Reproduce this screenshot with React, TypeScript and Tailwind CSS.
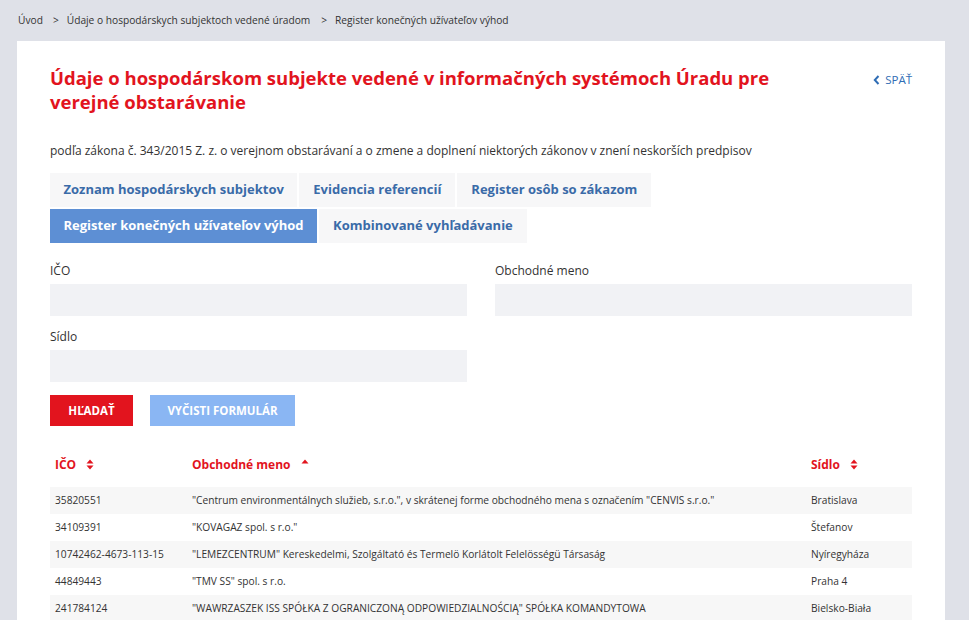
import React from "react";

const rows = [
  {
    ico: "35820551",
    name: "\"Centrum environmentálnych služieb, s.r.o.\", v skrátenej forme obchodného mena s označením \"CENVIS s.r.o.\"",
    seat: "Bratislava",
  },
  { ico: "34109391", name: "\"KOVAGAZ spol. s r.o.\"", seat: "Štefanov" },
  {
    ico: "10742462-4673-113-15",
    name: "\"LEMEZCENTRUM\" Kereskedelmi, Szolgáltató és Termelö Korlátolt Felelösségü Társaság",
    seat: "Nyíregyháza",
  },
  { ico: "44849443", name: "\"TMV SS\" spol. s r.o.", seat: "Praha 4" },
  {
    ico: "241784124",
    name: "\"WAWRZASZEK ISS SPÓŁKA Z OGRANICZONĄ ODPOWIEDZIALNOŚCIĄ\" SPÓŁKA KOMANDYTOWA",
    seat: "Bielsko-Biała",
  },
];

function SortIcon({ up = true, down = true }: { up?: boolean; down?: boolean }) {
  return (
    <svg width="8" height="11" viewBox="0 0 8 11" className="ml-[10px] inline-block align-[-1px]" aria-hidden>
      {up && <path d="M4 0.5 L7.5 4.5 H0.5 Z" fill="#e2141e" />}
      {down && <path d="M4 10.5 L7.5 6.5 H0.5 Z" fill="#e2141e" />}
    </svg>
  );
}

function Field({ label }: { label: string }) {
  return (
    <div>
      <label className="block text-[12px] leading-[18px] text-[#333]">{label}</label>
      <div className="mt-1 h-8 w-full bg-[#f1f2f5]" />
    </div>
  );
}

export default function App() {
  const tabRow1 = ["Zoznam hospodárskych subjektov", "Evidencia referencií", "Register osôb so zákazom"];

  return (
    <div className="min-h-[620px] bg-[#dfe1e8] font-['Open_Sans',sans-serif] text-[#333]">
      <nav className="flex h-[41px] items-center pl-[18px] text-[10.2px] text-[#333]">
        <span>Úvod</span>
        <span className="mx-[8px] ml-[10px]">&gt;</span>
        <span>Údaje o hospodárskych subjektoch vedené úradom</span>
        <span className="mx-[8px] ml-[11px]">&gt;</span>
        <span>Register konečných užívateľov výhod</span>
      </nav>

      <main className="ml-[17px] mr-6 bg-white px-[33px] pt-[25px]">
        <div className="flex items-start justify-between">
          <h1 className="w-[760px] text-[18.5px] font-bold leading-6 text-[#e2141e]">
            Údaje o hospodárskom subjekte vedené v informačných systémoch Úradu pre verejné obstarávanie
          </h1>
          <a className="mt-[5px] flex items-center gap-[5px] text-[11.5px] uppercase text-[#2f6db5]">
            <svg width="7" height="10" viewBox="0 0 7 10" aria-hidden>
              <path d="M5.5 1 L1.8 5 L5.5 9" stroke="#2f6db5" strokeWidth="2" fill="none" />
            </svg>
            Späť
          </a>
        </div>

        <p className="mt-[27px] text-[12px] leading-5">
          podľa zákona č. 343/2015 Z. z. o verejnom obstarávaní a o zmene a doplnení niektorých zákonov v znení neskorších predpisov
        </p>

        <div className="mt-3 flex flex-col gap-[2px]">
          <div className="flex gap-[2px]">
            {tabRow1.map((t, i) => (
              <div
                key={t}
                className={
                  i === 0
                    ? "flex h-[34px] items-center bg-[#f7f7f8] px-[13.5px] text-[13px] font-bold text-[#3a6ba8]"
                    : "flex h-[34px] items-center bg-[#f7f7f8] px-[14px] text-[13px] font-bold text-[#3a6ba8]"
                }
              >
                {t}
              </div>
            ))}
          </div>
          <div className="flex gap-[2px]">
            <div className="flex h-[34px] items-center bg-[#5d8fd4] px-[13.5px] text-[13px] font-bold text-white">
              Register konečných užívateľov výhod
            </div>
            <div className="flex h-[34px] items-center bg-[#f7f7f8] px-[14px] text-[13px] font-bold text-[#3a6ba8]">
              Kombinované vyhľadávanie
            </div>
          </div>
        </div>

        <div className="mt-[19px] grid grid-cols-2 gap-x-7 gap-y-3">
          <Field label="IČO" />
          <Field label="Obchodné meno" />
          <Field label="Sídlo" />
        </div>

        <div className="mt-[13px] flex gap-[17px]">
          <button className="h-[31px] w-[83px] bg-[#e2141e] text-[11.5px] font-bold uppercase text-white">
            Hľadať
          </button>
          <button className="h-[31px] w-[145px] bg-[#8ab6f3] text-[11.5px] font-bold uppercase text-white">
            Vyčisti formulár
          </button>
        </div>

        <table className="mt-[21px] w-full border-collapse text-left text-[10.2px]">
          <thead>
            <tr className="h-10 text-[12px] font-bold text-[#e2141e]">
              <th className="w-[142px] pb-[4px] pl-[5px] font-bold">
                IČO
                <SortIcon />
              </th>
              <th className="pb-[4px] font-bold">
                Obchodné meno
                <SortIcon down={false} />
              </th>
              <th className="w-[101px] pb-[4px] font-bold">
                Sídlo
                <SortIcon />
              </th>
            </tr>
          </thead>
          <tbody>
            {rows.map((r, i) => (
              <tr key={r.ico} className={i % 2 === 0 ? "h-[27px] bg-[#f7f7f7]" : "h-[27px] bg-white"}>
                <td className="pl-[5px]">{r.ico}</td>
                <td>{r.name}</td>
                <td>{r.seat}</td>
              </tr>
            ))}
          </tbody>
        </table>
      </main>
    </div>
  );
}
